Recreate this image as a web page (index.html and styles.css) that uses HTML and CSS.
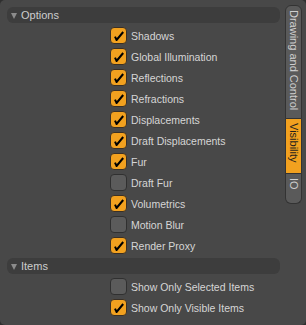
FILE: index.html
```html
<!DOCTYPE html>
<html>
<head>
<meta charset="utf-8">
<link rel="stylesheet" href="styles.css">
</head>
<body>
<div class="panel">
  <div class="main">
    <div class="section-head"><span class="tri"></span><span>Options</span></div>
    <div class="rows">
      <div class="row"><span class="cb on"></span><span>Shadows</span></div>
      <div class="row"><span class="cb on"></span><span>Global Illumination</span></div>
      <div class="row"><span class="cb on"></span><span>Reflections</span></div>
      <div class="row"><span class="cb on"></span><span>Refractions</span></div>
      <div class="row"><span class="cb on"></span><span>Displacements</span></div>
      <div class="row"><span class="cb on"></span><span>Draft Displacements</span></div>
      <div class="row"><span class="cb on"></span><span>Fur</span></div>
      <div class="row"><span class="cb"></span><span>Draft Fur</span></div>
      <div class="row"><span class="cb on"></span><span>Volumetrics</span></div>
      <div class="row"><span class="cb"></span><span>Motion Blur</span></div>
      <div class="row"><span class="cb on"></span><span>Render Proxy</span></div>
    </div>
    <div class="section-head"><span class="tri"></span><span>Items</span></div>
    <div class="rows">
      <div class="row"><span class="cb"></span><span>Show Only Selected Items</span></div>
      <div class="row"><span class="cb on"></span><span>Show Only Visible Items</span></div>
    </div>
  </div>
  <div class="tabs">
    <div class="tab tab-draw"><span>Drawing and Control</span></div>
    <div class="tab tab-vis active"><span>Visibility</span></div>
    <div class="tab tab-io"><span>IO</span></div>
  </div>
</div>
</body>
</html>
```
FILE: styles.css
```css
html, body {
  margin: 0;
  padding: 0;
  background: #2f2f2f;
}
body {
  width: 306px;
  height: 325px;
  overflow: hidden;
  font-family: "Liberation Sans", Arial, sans-serif;
}
.panel {
  width: 306px;
  height: 325px;
  box-sizing: border-box;
  background: #484848;
  border-radius: 5px;
  padding: 7px 0 0 7px;
  display: flex;
  align-items: flex-start;
}
.main {
  width: 273px;
  display: flex;
  flex-direction: column;
}
.section-head {
  height: 16px;
  background: #3d3d3d;
  border-radius: 6px;
  display: flex;
  align-items: center;
  color: #cdcdcd;
  font-size: 11px;
  padding-left: 4px;
  gap: 4px;
}
.tri {
  width: 0;
  height: 0;
  border-left: 3.5px solid transparent;
  border-right: 3.5px solid transparent;
  border-top: 6px solid #8c8c8c;
  margin-top: 1px;
}
.rows {
  display: flex;
  flex-direction: column;
  padding: 2px 0 2px 103px;
}
.row {
  height: 21px;
  display: flex;
  align-items: center;
  gap: 4px;
  color: #d6d6d6;
  font-size: 10.5px;
}
.cb {
  width: 17px;
  height: 17px;
  box-sizing: border-box;
  border-radius: 4px;
  border: 1px solid #303030;
  background: #5b5b5b;
  position: relative;
  flex: none;
}
.cb.on {
  background: #f2a11f;
  border-color: #3a3026;
}
.cb.on::after {
  content: "";
  position: absolute;
  left: 3px;
  top: 3px;
  width: 10px;
  height: 10px;
  background: no-repeat center / 10px 10px url("data:image/svg+xml;utf8,<svg xmlns='http://www.w3.org/2000/svg' viewBox='0 0 10 10'><path d='M1 5.6 L2.6 9 L9.2 1' fill='none' stroke='%23000' stroke-width='2' stroke-linejoin='miter'/></svg>");
}
.tabs {
  margin-left: 5px;
  margin-top: -2px;
  width: 17px;
  display: flex;
  flex-direction: column;
}
.tab {
  box-sizing: border-box;
  background: #5a5a5a;
  border: 1px solid #333;
  color: #cfcfcf;
  font-size: 11px;
  writing-mode: vertical-rl;
  display: flex;
  align-items: center;
  justify-content: flex-start;
  padding-top: 4px;
}
.tab-draw {
  height: 114px;
  border-radius: 6px 6px 0 0;
}
.tab-vis {
  height: 55px;
  border-top: none;
}
.tab-io {
  height: 30px;
  border-top: none;
  border-radius: 0 0 6px 6px;
}
.tab.active {
  background: #f2a11f;
  color: #1e1e1e;
}
```
